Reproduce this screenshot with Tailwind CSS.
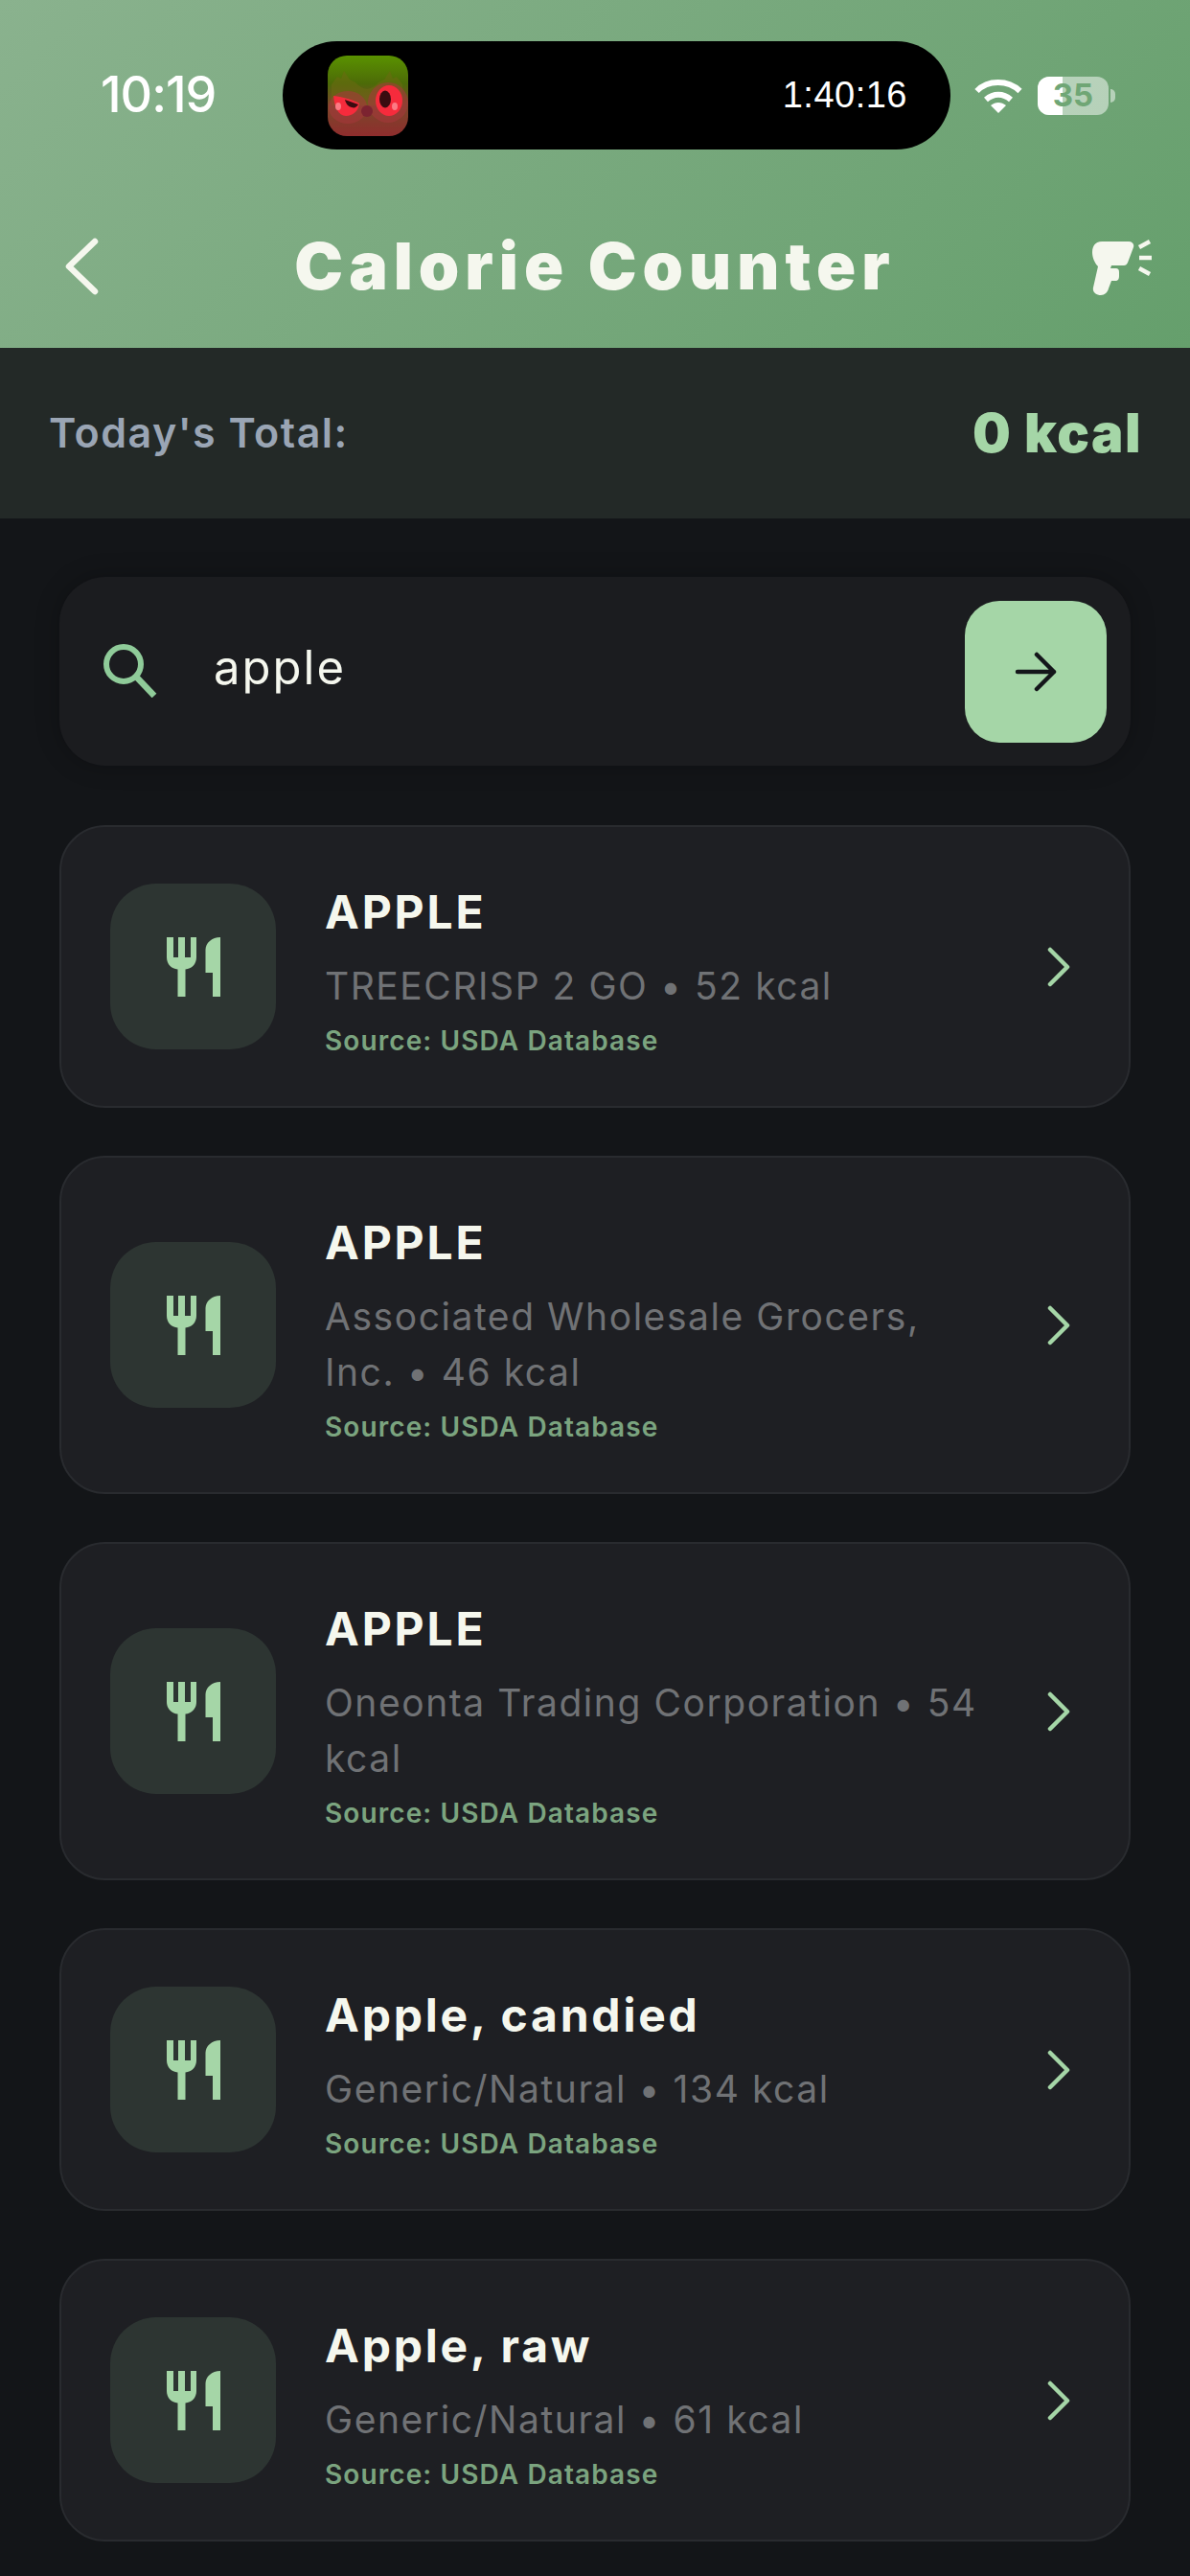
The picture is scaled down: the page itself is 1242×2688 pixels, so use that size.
<!DOCTYPE html>
<html lang="en">
<head>
    <meta charset="UTF-8">
    <title>Calorie Counter</title>
    <script src="https://cdn.jsdelivr.net/npm/@tailwindcss/browser@4"></script>
</head>
<body class="bg-[#131518] font-['Inter',sans-serif]">
<div class="w-[1242px] h-[2688px] overflow-hidden relative">

    <!-- Green header -->
    <header class="h-[363px] bg-linear-135 from-[#8ab28e] to-[#659f6c] relative">
        <!-- status bar -->
        <div class="absolute left-[105px] top-[69px] text-[52px] leading-[60px] font-medium text-white tracking-[-1px]">10:19</div>
        <div class="absolute left-[295px] top-[43px] w-[697px] h-[113px] rounded-full bg-black flex items-center justify-between pl-[47px] pr-[45px]">
            <svg width="84" height="84" viewBox="0 0 84 84">
                <defs>
                    <linearGradient id="owl" x1="0" y1="0" x2="0" y2="1">
                        <stop offset="0" stop-color="#5a9200"/>
                        <stop offset="0.35" stop-color="#4c6a08"/>
                        <stop offset="0.6" stop-color="#79492a"/>
                        <stop offset="1" stop-color="#8f2d2d"/>
                    </linearGradient>
                </defs>
                <rect width="84" height="84" rx="20" fill="url(#owl)"/>
                <path d="M4 30l6-8 4 2 3-8 6 9 6 3c8 9 16 9 24 0l6-3 6-9 3 8 4-2 6 8v22H4z" fill="#6d6a12" opacity=".5"/>
                <ellipse cx="21" cy="54" rx="20" ry="17" fill="#a8373c" opacity=".55"/>
                <ellipse cx="63" cy="49" rx="21" ry="21" fill="#a8373c" opacity=".55"/>
                <path d="M6 42c10 1 23 5 27 8-1 8-7 13-14 13C11 63 7 53 6 42z" fill="#f62b3c"/>
                <ellipse cx="64" cy="47" rx="14" ry="16" fill="#f62b3c"/>
                <ellipse cx="60" cy="45.5" rx="6" ry="9" fill="#3a0c10"/>
                <path d="M18 46l14 5c-2 3-4 4-7 3-4-1-6-4-7-8z" fill="#3a0c10"/>
                <ellipse cx="11" cy="53" rx="3" ry="4" fill="#fb7a84"/>
                <ellipse cx="70" cy="53" rx="3" ry="4" fill="#fb7a84"/>
                <circle cx="41" cy="58" r="6" fill="#7c2330"/>
            </svg>
            <span class="text-[38px] font-['Liberation_Sans',sans-serif] text-white tracking-[0.5px]">1:40:16</span>
        </div>
        <svg class="absolute left-[1017px] top-[82px]" width="50" height="36" viewBox="0 0 50 36" fill="none">
            <path d="M2.500 13C14 1 35 1 47.500 13" stroke="#fff" stroke-width="6"/>
            <path d="M12 22c8-7 18-7 26 0" stroke="#fff" stroke-width="6"/>
            <path d="M17 28c5-4 11-4 16 0l-8 8z" fill="#fff"/>
        </svg>
        <!-- battery -->
        <div class="absolute left-[1083px] top-[80px] w-[74px] h-[40px] rounded-[12px] bg-white/50 overflow-hidden">
            <div class="w-[26px] h-full bg-white"></div>
            <span class="absolute inset-0 flex items-center justify-center text-[33px] font-bold text-[#6fa675]">35</span>
        </div>
        <div class="absolute left-[1159px] top-[93px] w-[5px] h-[14px] rounded-r-full bg-white/50"></div>

        <!-- nav row -->
        <svg class="absolute left-[66px] top-[247px]" width="38" height="62" viewBox="0 0 38 62" fill="none">
            <path d="M33 5L6 31l27 26" stroke="#f5f7ee" stroke-width="6.500" stroke-linecap="round" stroke-linejoin="round"/>
        </svg>
        <h1 class="absolute left-0 right-0 top-[238px] text-center text-[68px] leading-[78px] font-black text-[#f5f7ee] tracking-[6px]">Calorie Counter</h1>
        <svg class="absolute left-[1140px] top-[250px]" width="64" height="60" viewBox="0 0 64 60" fill="none">
            <path d="M10 2H38c4 0 6 3 5 6l-6 16c-1 2-2 3-4 3H20l-1 3h5c3 0 4 1 4 4v4c0 3-1 5-4 5h-4l-3 8c-1 4-4 7-8 7-5 0-9-3-8-8l5-22C2 24 0 18 0 13 0 6 4 2 10 2z" fill="#f5f7ee"/>
            <path d="M49 8l11-6M49 19h13M49 30l11 6" stroke="#f5f7ee" stroke-width="4.500"/>
        </svg>
    </header>

    <!-- Today's total -->
    <div class="h-[178px] bg-[#232927] flex items-center justify-between pl-[51px] pr-[50px]">
        <span class="text-[43px] font-semibold text-[#9aa5b4] tracking-[1.500px] mt-[-1px]">Today's Total:</span>
        <span class="text-[56px] font-black text-[#a5d6a7] tracking-[1.500px] mt-[-1px]">0 kcal</span>
    </div>

    <main class="px-[62px] pt-[61px]">
        <!-- Search -->
        <div class="h-[197px] rounded-[48px] bg-[#1b1c1f] flex items-center pl-[44px] pr-[25px] shadow-[0_0_24px_rgba(0,0,0,0.25)]">
            <svg width="58" height="58" viewBox="0 0 58 58" fill="none" class="mt-[-4px]">
                <circle cx="23" cy="23" r="18" stroke="#8fcb99" stroke-width="6"/>
                <path d="M36 36l19 20" stroke="#8fcb99" stroke-width="6.500"/>
            </svg>
            <span class="ml-[59px] text-[49px] text-[#f5f7ee] tracking-[2px] flex-1 mt-[-8px]">apple</span>
            <div class="w-[148px] h-[148px] rounded-[36px] bg-[#a5d6a7] flex items-center justify-center">
                <svg width="44" height="44" viewBox="0 0 44 44" fill="none">
                    <path d="M3 22h38M23 4l18 18-18 18" stroke="#14161a" stroke-width="4.500" stroke-linecap="round" stroke-linejoin="round"/>
                </svg>
            </div>
        </div>

        <!-- Results -->
        <div class="mt-[62px] flex flex-col gap-[50px]">
            <div class="h-[295px] rounded-[48px] bg-[#1e1f23] border-2 border-[#292b2f] flex items-center pl-[51px] pr-[60px]">
                <div class="w-[173px] h-[173px] shrink-0 rounded-[48px] bg-[#2d3532] flex items-center justify-center">
                    <svg width="56" height="62" viewBox="0 0 56 62"><path d="M0 0h7v21h5V0h7v21h6V0h6v21c0 7-5 12-11.500 12.500V62h-8V33.500C5 33 0 28 0 21zM40.500 13C40.500 6 47 0 56 0v62H48V37h-7.500z" fill="#a5d6a7"/></svg>
                </div>
                <div class="ml-[51px] mr-[60px] mt-[12px] flex-1 min-w-0">
                    <div class="text-[48px] leading-[58px] font-bold text-[#f5f7ee] tracking-[2.800px]">APPLE</div>
                    <div class="mt-[19px] text-[39px] leading-[58px] text-[#707275] tracking-[1.550px]">TREECRISP 2 GO • 52 kcal</div>
                    <div class="mt-[8px] text-[28px] leading-[40px] font-semibold text-[#7ba47f] tracking-[1.100px]">Source: USDA Database</div>
                </div>
                <svg width="26" height="42" viewBox="0 0 26 42" fill="none"><path d="M4 3l18 18L4 39" stroke="#a5d6a7" stroke-width="4.500" stroke-linecap="round" stroke-linejoin="round"/></svg>
            </div>

            <div class="h-[353px] rounded-[48px] bg-[#1e1f23] border-2 border-[#292b2f] flex items-center pl-[51px] pr-[60px]">
                <div class="w-[173px] h-[173px] shrink-0 rounded-[48px] bg-[#2d3532] flex items-center justify-center">
                    <svg width="56" height="62" viewBox="0 0 56 62"><path d="M0 0h7v21h5V0h7v21h6V0h6v21c0 7-5 12-11.500 12.500V62h-8V33.500C5 33 0 28 0 21zM40.500 13C40.500 6 47 0 56 0v62H48V37h-7.500z" fill="#a5d6a7"/></svg>
                </div>
                <div class="ml-[51px] mr-[60px] mt-[12px] flex-1 min-w-0">
                    <div class="text-[48px] leading-[58px] font-bold text-[#f5f7ee] tracking-[2.800px]">APPLE</div>
                    <div class="mt-[19px] text-[39px] leading-[58px] text-[#707275] tracking-[1.550px]">Associated Wholesale Grocers, Inc. • 46 kcal</div>
                    <div class="mt-[8px] text-[28px] leading-[40px] font-semibold text-[#7ba47f] tracking-[1.100px]">Source: USDA Database</div>
                </div>
                <svg width="26" height="42" viewBox="0 0 26 42" fill="none"><path d="M4 3l18 18L4 39" stroke="#a5d6a7" stroke-width="4.500" stroke-linecap="round" stroke-linejoin="round"/></svg>
            </div>

            <div class="h-[353px] rounded-[48px] bg-[#1e1f23] border-2 border-[#292b2f] flex items-center pl-[51px] pr-[60px]">
                <div class="w-[173px] h-[173px] shrink-0 rounded-[48px] bg-[#2d3532] flex items-center justify-center">
                    <svg width="56" height="62" viewBox="0 0 56 62"><path d="M0 0h7v21h5V0h7v21h6V0h6v21c0 7-5 12-11.500 12.500V62h-8V33.500C5 33 0 28 0 21zM40.500 13C40.500 6 47 0 56 0v62H48V37h-7.500z" fill="#a5d6a7"/></svg>
                </div>
                <div class="ml-[51px] mr-[60px] mt-[12px] flex-1 min-w-0">
                    <div class="text-[48px] leading-[58px] font-bold text-[#f5f7ee] tracking-[2.800px]">APPLE</div>
                    <div class="mt-[19px] text-[39px] leading-[58px] text-[#707275] tracking-[1.550px]">Oneonta Trading Corporation • 54 kcal</div>
                    <div class="mt-[8px] text-[28px] leading-[40px] font-semibold text-[#7ba47f] tracking-[1.100px]">Source: USDA Database</div>
                </div>
                <svg width="26" height="42" viewBox="0 0 26 42" fill="none"><path d="M4 3l18 18L4 39" stroke="#a5d6a7" stroke-width="4.500" stroke-linecap="round" stroke-linejoin="round"/></svg>
            </div>

            <div class="h-[295px] rounded-[48px] bg-[#1e1f23] border-2 border-[#292b2f] flex items-center pl-[51px] pr-[60px]">
                <div class="w-[173px] h-[173px] shrink-0 rounded-[48px] bg-[#2d3532] flex items-center justify-center">
                    <svg width="56" height="62" viewBox="0 0 56 62"><path d="M0 0h7v21h5V0h7v21h6V0h6v21c0 7-5 12-11.500 12.500V62h-8V33.500C5 33 0 28 0 21zM40.500 13C40.500 6 47 0 56 0v62H48V37h-7.500z" fill="#a5d6a7"/></svg>
                </div>
                <div class="ml-[51px] mr-[60px] mt-[12px] flex-1 min-w-0">
                    <div class="text-[48px] leading-[58px] font-bold text-[#f5f7ee] tracking-[2.800px]">Apple, candied</div>
                    <div class="mt-[19px] text-[39px] leading-[58px] text-[#707275] tracking-[1.550px]">Generic/Natural • 134 kcal</div>
                    <div class="mt-[8px] text-[28px] leading-[40px] font-semibold text-[#7ba47f] tracking-[1.100px]">Source: USDA Database</div>
                </div>
                <svg width="26" height="42" viewBox="0 0 26 42" fill="none"><path d="M4 3l18 18L4 39" stroke="#a5d6a7" stroke-width="4.500" stroke-linecap="round" stroke-linejoin="round"/></svg>
            </div>

            <div class="h-[295px] rounded-[48px] bg-[#1e1f23] border-2 border-[#292b2f] flex items-center pl-[51px] pr-[60px]">
                <div class="w-[173px] h-[173px] shrink-0 rounded-[48px] bg-[#2d3532] flex items-center justify-center">
                    <svg width="56" height="62" viewBox="0 0 56 62"><path d="M0 0h7v21h5V0h7v21h6V0h6v21c0 7-5 12-11.500 12.500V62h-8V33.500C5 33 0 28 0 21zM40.500 13C40.500 6 47 0 56 0v62H48V37h-7.500z" fill="#a5d6a7"/></svg>
                </div>
                <div class="ml-[51px] mr-[60px] mt-[12px] flex-1 min-w-0">
                    <div class="text-[48px] leading-[58px] font-bold text-[#f5f7ee] tracking-[2.800px]">Apple, raw</div>
                    <div class="mt-[19px] text-[39px] leading-[58px] text-[#707275] tracking-[1.550px]">Generic/Natural • 61 kcal</div>
                    <div class="mt-[8px] text-[28px] leading-[40px] font-semibold text-[#7ba47f] tracking-[1.100px]">Source: USDA Database</div>
                </div>
                <svg width="26" height="42" viewBox="0 0 26 42" fill="none"><path d="M4 3l18 18L4 39" stroke="#a5d6a7" stroke-width="4.500" stroke-linecap="round" stroke-linejoin="round"/></svg>
            </div>
        </div>
    </main>
</div>
</body>
</html>
